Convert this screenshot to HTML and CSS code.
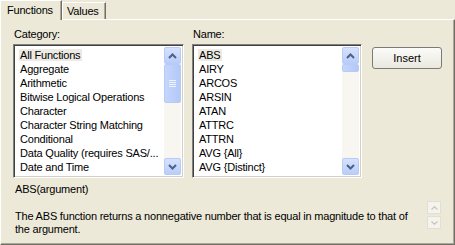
FILE: index.html
```html
<!DOCTYPE html>
<html lang="en">
<head>
    <meta charset="UTF-8">
    <title>Functions</title>
    <link rel="stylesheet" href="styles.css">
</head>
<body>
    <div class="tabs">
        <div class="tab active">Functions</div>
        <div class="tab">Values</div>
    </div>
    <div class="panel">
        <div class="top-row">
            <div class="column">
                <div class="label">Category:</div>
                <div class="listbox category">
                    <div class="items">
                        <div class="item"><span class="sel">All Functions</span></div>
                        <div class="item">Aggregate</div>
                        <div class="item">Arithmetic</div>
                        <div class="item">Bitwise Logical Operations</div>
                        <div class="item">Character</div>
                        <div class="item">Character String Matching</div>
                        <div class="item">Conditional</div>
                        <div class="item">Data Quality (requires SAS/...</div>
                        <div class="item">Date and Time</div>
                    </div>
                    <div class="scrollbar">
                        <div class="sbtn"><svg width="9" height="6" viewBox="0 0 9 6"><path d="M1 5 L4.5 1.5 L8 5" fill="none" stroke="#4d6185" stroke-width="2"/></svg></div>
                        <div class="track">
                            <div class="thumb big"><span class="grip"></span></div>
                        </div>
                        <div class="sbtn"><svg width="9" height="6" viewBox="0 0 9 6"><path d="M1 1 L4.5 4.5 L8 1" fill="none" stroke="#4d6185" stroke-width="2"/></svg></div>
                    </div>
                </div>
            </div>
            <div class="column">
                <div class="label">Name:</div>
                <div class="listbox name">
                    <div class="items">
                        <div class="item"><span class="sel">ABS</span></div>
                        <div class="item">AIRY</div>
                        <div class="item">ARCOS</div>
                        <div class="item">ARSIN</div>
                        <div class="item">ATAN</div>
                        <div class="item">ATTRC</div>
                        <div class="item">ATTRN</div>
                        <div class="item">AVG {All}</div>
                        <div class="item">AVG {Distinct}</div>
                    </div>
                    <div class="scrollbar">
                        <div class="sbtn"><svg width="9" height="6" viewBox="0 0 9 6"><path d="M1 5 L4.5 1.5 L8 5" fill="none" stroke="#4d6185" stroke-width="2"/></svg></div>
                        <div class="track">
                            <div class="thumb small"></div>
                        </div>
                        <div class="sbtn"><svg width="9" height="6" viewBox="0 0 9 6"><path d="M1 1 L4.5 4.5 L8 1" fill="none" stroke="#4d6185" stroke-width="2"/></svg></div>
                    </div>
                </div>
            </div>
            <button class="insert">Insert</button>
        </div>
        <div class="signature">ABS(argument)</div>
        <div class="desc-row">
            <div class="desc">The ABS function returns a nonnegative number that is equal in magnitude to that of the argument.</div>
            <div class="mini-scroll">
                <div class="mbtn"><svg width="7" height="4" viewBox="0 0 7 4"><path d="M0.5 3.5 L3.5 0.8 L6.5 3.5" fill="none" stroke="#c9c7ba" stroke-width="1.3"/></svg></div>
                <div class="mbtn"><svg width="7" height="4" viewBox="0 0 7 4"><path d="M0.5 0.5 L3.5 3.2 L6.5 0.5" fill="none" stroke="#c9c7ba" stroke-width="1.3"/></svg></div>
            </div>
        </div>
    </div>
</body>
</html>
```

FILE: styles.css
```css
body {
    margin: 0;
    width: 455px;
    height: 245px;
    background-color: #ece9d8;
    font-family: "Liberation Sans", Arial, sans-serif;
    font-size: 11px;
    letter-spacing: -0.2px;
    color: #000;
    overflow: hidden;
}
.tabs {
    display: flex;
    align-items: flex-end;
    height: 19px;
}
.tab {
    box-sizing: border-box;
    height: 17px;
    padding: 1px 0 0 6px;
    line-height: 15px;
    border-top: 1px solid #fff;
    border-left: 1px solid #fff;
    border-right: 1px solid #716f64;
    box-shadow: inset -1px 0 0 #aca899;
}
.tab.active {
    height: 20px;
    width: 62px;
    padding-top: 2px;
    margin-bottom: -1px;
    position: relative;
    z-index: 1;
    background-color: #ece9d8;
}
.tab:not(.active) {
    width: 44px;
    padding-left: 4px;
}
.panel {
    box-sizing: border-box;
    height: 226px;
    width: 455px;
    border-top: 1px solid #fff;
    border-left: 1px solid #fff;
    border-right: 1px solid #716f64;
    border-bottom: 1px solid #716f64;
    box-shadow: inset -1px -1px 0 #aca899;
    padding: 8px 0 0 12px;
}
.top-row {
    display: flex;
    align-items: flex-start;
}
.column {
    margin-right: 8px;
}
.label {
    height: 16px;
    line-height: 13px;
    padding-left: 1px;
}
.listbox {
    box-sizing: border-box;
    height: 134px;
    display: flex;
    background-color: #fff;
    border-top: 1px solid #808080;
    border-left: 1px solid #808080;
    border-right: 1px solid #fff;
    border-bottom: 1px solid #fff;
    box-shadow: inset 1px 1px 0 #404040, inset -1px -1px 0 #d4d0c8;
    padding: 2px;
}
.listbox.category {
    width: 171px;
}
.listbox.name {
    width: 170px;
}
.items {
    flex: 1;
    padding-left: 4px;
    padding-top: 1px;
}
.item {
    height: 14px;
    line-height: 14px;
    white-space: nowrap;
}
.sel {
    background-color: #eceae2;
    padding: 0 2px 0 1px;
    margin-left: -1px;
}
.scrollbar {
    width: 17px;
    display: flex;
    flex-direction: column;
    background-color: #f7f6f1;
}
.sbtn {
    box-sizing: border-box;
    height: 17px;
    border: 1px solid #b8cbf5;
    border-radius: 2px;
    background: linear-gradient(#d6e1fd, #b9cdfb);
    display: flex;
    align-items: center;
    justify-content: center;
}
.track {
    flex: 1;
}
.thumb {
    box-sizing: border-box;
    border: 1px solid #b8cbf5;
    border-radius: 2px;
    background: linear-gradient(90deg, #c5d6fc, #b3c8f8);
    display: flex;
    align-items: center;
    justify-content: center;
}
.thumb.big {
    height: 39px;
}
.thumb.small {
    height: 8px;
}
.grip {
    width: 7px;
    height: 7px;
    background: repeating-linear-gradient(#eef3fe 0 1px, transparent 1px 2px);
}
.insert {
    box-sizing: border-box;
    width: 70px;
    height: 22px;
    margin-top: 19px;
    margin-left: 2px;
    font-family: "Liberation Sans", Arial, sans-serif;
    font-size: 11px;
    background: linear-gradient(#fbfbf9, #eae8de);
    border: 1px solid #7a7a7a;
    border-radius: 3px;
    color: #000;
    padding: 0;
}
.signature {
    margin-top: 5px;
    padding-left: 2px;
    height: 16px;
    line-height: 13px;
}
.desc-row {
    display: flex;
    margin-top: 11px;
    padding-left: 2px;
}
.desc {
    width: 408px;
    line-height: 13px;
}
.mini-scroll {
    margin-left: 4px;
    margin-top: -9px;
}
.mbtn {
    box-sizing: border-box;
    width: 14px;
    height: 13px;
    margin-bottom: 2px;
    border: 1px solid #e2dfd2;
    background-color: #f4f3ee;
    display: flex;
    align-items: center;
    justify-content: center;
}
```
